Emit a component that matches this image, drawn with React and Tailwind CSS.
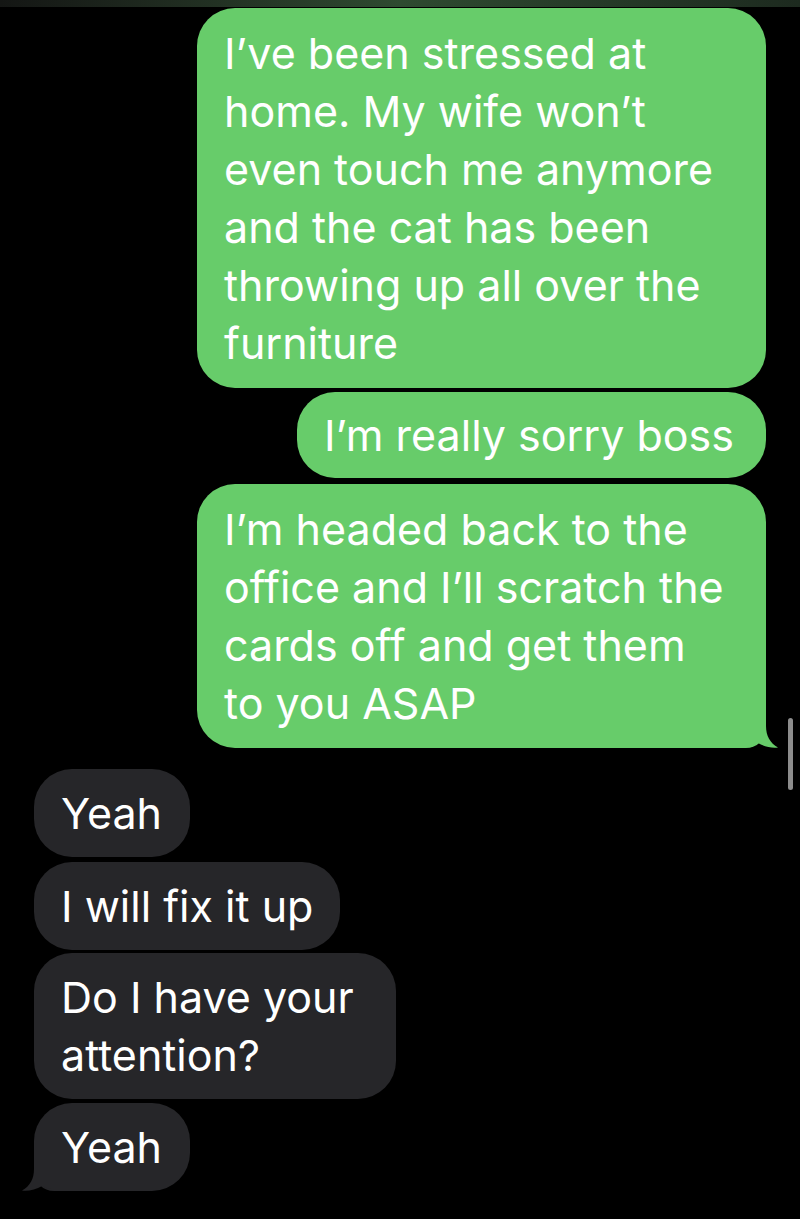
import React from 'react';

const font = { fontFamily: 'Inter, "Noto Sans", sans-serif' };

function SentTail() {
  return (
    <svg className="absolute right-[-12px] bottom-0" width="30" height="30" viewBox="0 0 30 30">
      <path d="M0 0 H18 V8 C18 18 22 25 30 29.5 C24 30.5 16 28.5 10 25 C6 27 3 28 0 28 Z" fill="#67cc6a" />
    </svg>
  );
}

function ReceivedTail() {
  return (
    <svg className="absolute left-[-12px] bottom-0" width="30" height="30" viewBox="0 0 30 30">
      <path d="M30 0 H12 V8 C12 18 8 25 0 29.5 C6 30.5 14 28.5 20 25 C24 27 27 28 30 28 Z" fill="#262629" />
    </svg>
  );
}

function Sent({ lines, width, tail, className = '' }) {
  return (
    <div
      className={`relative bg-[#67cc6a] rounded-[38px] ${tail ? 'rounded-br-[20px]' : ''} py-[16px] pl-[27px] text-white text-[43px] leading-[58px] whitespace-nowrap ${className}`}
      style={{ width }}
    >
      {lines.map((l, i) => <div key={i}>{l}</div>)}
      {tail && <SentTail />}
    </div>
  );
}

function Received({ lines, width, tail, className = '' }) {
  return (
    <div
      className={`relative bg-[#262629] rounded-[38px] ${tail ? 'rounded-bl-[20px]' : ''} py-[15px] pl-[27px] text-white text-[43px] leading-[58px] whitespace-nowrap ${className}`}
      style={{ width }}
    >
      {lines.map((l, i) => <div key={i}>{l}</div>)}
      {tail && <ReceivedTail />}
    </div>
  );
}

export default function App() {
  return (
    <div className="relative w-[800px] h-[1219px] bg-black overflow-hidden" style={font}>
      {/* top edge of the screen */}
      <div className="h-[7px] bg-gradient-to-r from-[#141614] via-[#2e4a30] to-[#1d2a1f]" />

      {/* scroll indicator */}
      <div className="absolute left-[788px] top-[718px] w-[5px] h-[72px] rounded-full bg-[#8c8c8c]" />

      <div className="flex flex-col items-end pr-[34px] pt-[1px]">
        <Sent
          width="569px"
          lines={[
            'I’ve been stressed at',
            'home. My wife won’t',
            'even touch me anymore',
            'and the cat has been',
            'throwing up all over the',
            'furniture',
          ]}
        />
        <Sent width="469px" className="mt-[4px] !py-[14px]" lines={['I’m really sorry boss']} />
        <Sent
          width="569px"
          className="mt-[6px]"
          tail
          lines={[
            'I’m headed back to the',
            'office and I’ll scratch the',
            'cards off and get them',
            'to you ASAP',
          ]}
        />
      </div>

      <div className="flex flex-col items-start pl-[34px] mt-[21px]">
        <Received width="156px" lines={['Yeah']} />
        <Received width="306px" className="mt-[5px]" lines={['I will fix it up']} />
        <Received width="362px" className="mt-[3px]" lines={['Do I have your', 'attention?']} />
        <Received width="156px" className="mt-[4px]" tail lines={['Yeah']} />
      </div>
    </div>
  );
}
